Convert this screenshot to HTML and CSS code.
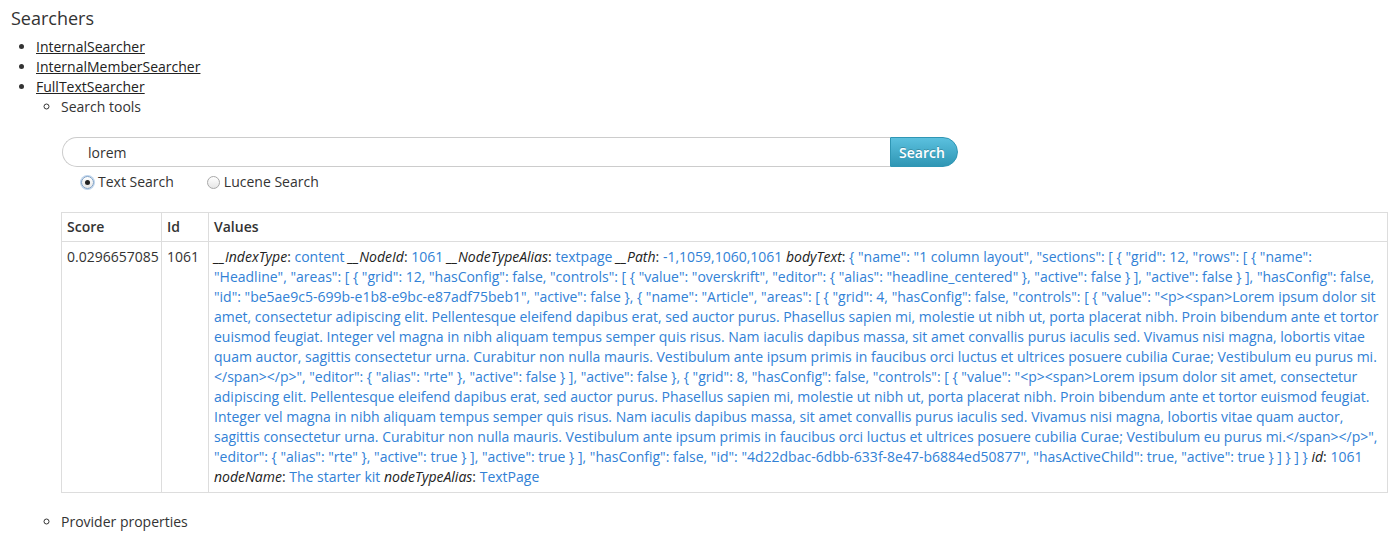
FILE: index.html
```html
<!DOCTYPE html>
<html>
<head>
<meta charset="utf-8">
<link rel="stylesheet" href="styles.css">
</head>
<body>
<h3 class="title">Searchers</h3>
<ul class="searchers">
  <li><a href="#">InternalSearcher</a></li>
  <li><a href="#">InternalMemberSearcher</a></li>
  <li><a href="#">FullTextSearcher</a>
    <ul class="sub">
      <li>Search tools
        <div class="search-tools">
          <form class="search-form">
            <input class="search-input" type="text" value="lorem">
            <button class="search-btn" type="button">Search</button>
          </form>
          <div class="radios">
            <label class="radio"><span class="radio-dot checked"></span>Text Search</label>
            <label class="radio"><span class="radio-dot"></span>Lucene Search</label>
          </div>
          <table class="results">
            <colgroup>
              <col class="col-score">
              <col class="col-id">
              <col>
            </colgroup>
            <thead>
              <tr><th>Score</th><th>Id</th><th>Values</th></tr>
            </thead>
            <tbody>
              <tr>
                <td class="score">0.0296657085</td>
                <td>1061</td>
                <td><em>__IndexType</em>: <span class="v">content</span> <em>__NodeId</em>: <span class="v">1061</span> <em>__NodeTypeAlias</em>: <span class="v">textpage</span> <em>__Path</em>: <span class="v">-1,1059,1060,1061</span> <em>bodyText</em>: <span class="v">{ "name": "1 column layout", "sections": [ { "grid": 12, "rows": [ { "name": "Headline", "areas": [ { "grid": 12, "hasConfig": false, "controls": [ { "value": "overskrift", "editor": { "alias": "headline_centered" }, "active": false } ], "active": false } ], "hasConfig": false, "id": "be5ae9c5-699b-e1b8-e9bc-e87adf75beb1", "active": false }, { "name": "Article", "areas": [ { "grid": 4, "hasConfig": false, "controls": [ { "value": "&lt;p&gt;&lt;span&gt;Lorem ipsum dolor sit amet, consectetur adipiscing elit. Pellentesque eleifend dapibus erat, sed auctor purus. Phasellus sapien mi, molestie ut nibh ut, porta placerat nibh. Proin bibendum ante et tortor euismod feugiat. Integer vel magna in nibh aliquam tempus semper quis risus. Nam iaculis dapibus massa, sit amet convallis purus iaculis sed. Vivamus nisi magna, lobortis vitae quam auctor, sagittis consectetur urna. Curabitur non nulla mauris. Vestibulum ante ipsum primis in faucibus orci luctus et ultrices posuere cubilia Curae; Vestibulum eu purus mi.&lt;/span&gt;&lt;/p&gt;", "editor": { "alias": "rte" }, "active": false } ], "active": false }, { "grid": 8, "hasConfig": false, "controls": [ { "value": "&lt;p&gt;&lt;span&gt;Lorem ipsum dolor sit amet, consectetur adipiscing elit. Pellentesque eleifend dapibus erat, sed auctor purus. Phasellus sapien mi, molestie ut nibh ut, porta placerat nibh. Proin bibendum ante et tortor euismod feugiat. Integer vel magna in nibh aliquam tempus semper quis risus. Nam iaculis dapibus massa, sit amet convallis purus iaculis sed. Vivamus nisi magna, lobortis vitae quam auctor, sagittis consectetur urna. Curabitur non nulla mauris. Vestibulum ante ipsum primis in faucibus orci luctus et ultrices posuere cubilia Curae; Vestibulum eu purus mi.&lt;/span&gt;&lt;/p&gt;", "editor": { "alias": "rte" }, "active": true } ], "active": true } ], "hasConfig": false, "id": "4d22dbac-6dbb-633f-8e47-b6884ed50877", "hasActiveChild": true, "active": true } ] } ] }</span> <em>id</em>: <span class="v">1061</span> <em>nodeName</em>: <span class="v">The starter kit</span> <em>nodeTypeAlias</em>: <span class="v">TextPage</span></td>
              </tr>
            </tbody>
          </table>
        </div>
      </li>
      <li class="provider">Provider properties</li>
    </ul>
  </li>
</ul>
</body>
</html>
```

FILE: styles.css
```css
html, body {
  margin: 0;
  padding: 0;
  background: #fff;
}
body {
  padding: 0 10px;
  font-family: "Open Sans", "Liberation Sans", sans-serif;
  font-size: 14px;
  line-height: 20px;
  color: #333;
}
.title {
  margin: 5px 0 6px 1px;
  font-size: 18px;
  line-height: 26px;
  font-weight: normal;
  color: #333;
}
.searchers {
  margin: 0;
  padding-left: 26px;
  list-style: disc;
}
.searchers a {
  color: #222;
  text-decoration: underline;
}
.sub {
  margin: 0;
  padding-left: 25px;
  list-style: circle;
}
.search-tools {
  padding-top: 20px;
}
.search-form {
  display: flex;
  margin: 0 0 0 1px;
}
.search-input {
  box-sizing: border-box;
  width: 828px;
  height: 30px;
  margin: 0;
  padding: 0 0 0 25px;
  border: 1px solid #ccc;
  border-right: none;
  border-radius: 15px 0 0 15px;
  font-family: inherit;
  font-size: 14px;
  color: #333;
  outline: none;
  background: #fff;
}
.search-btn {
  box-sizing: border-box;
  width: 68px;
  height: 30px;
  margin: 0;
  padding: 0 4px 0 0;
  border: 1px solid #2f96b4;
  border-radius: 0 15px 15px 0;
  background: linear-gradient(#5bc0de, #2f96b4);
  color: #fff;
  font-family: inherit;
  font-size: 14px;
  font-weight: 600;
  text-shadow: 0 -1px 0 rgba(0,0,0,0.2);
}
.radios {
  display: flex;
  gap: 33px;
  margin: 5px 0 0 20px;
}
.radio {
  display: flex;
  align-items: center;
  gap: 4px;
  color: #333;
}
.radio-dot {
  box-sizing: border-box;
  width: 13px;
  height: 13px;
  border-radius: 50%;
  border: 1px solid #a8a8a8;
  background: linear-gradient(#fff, #e6e6e6);
  position: relative;
}
.radio-dot.checked {
  border-color: #7d9fc4;
  box-shadow: 0 0 0 1px #bcd3ec;
}
.radio-dot.checked::after {
  content: "";
  position: absolute;
  left: 3px;
  top: 3px;
  width: 5px;
  height: 5px;
  border-radius: 50%;
  background: #222;
}
.results {
  margin-top: 20px;
  width: 100%;
  table-layout: fixed;
  border-collapse: collapse;
  border: 1px solid #ddd;
}
.col-score { width: 100px; }
.col-id { width: 47px; }
.results th, .results td {
  border: 1px solid #ddd;
  padding: 5px;
  text-align: left;
  vertical-align: top;
}
.results th {
  padding-top: 4px;
  padding-bottom: 4px;
  font-weight: 600;
  color: #333;
}
.results td.score {
  padding-right: 0;
  white-space: nowrap;
}
.results em {
  color: #222;
  font-style: italic;
}
.v {
  color: #3181d6;
}
.provider {
  margin-top: 19px;
}
```
